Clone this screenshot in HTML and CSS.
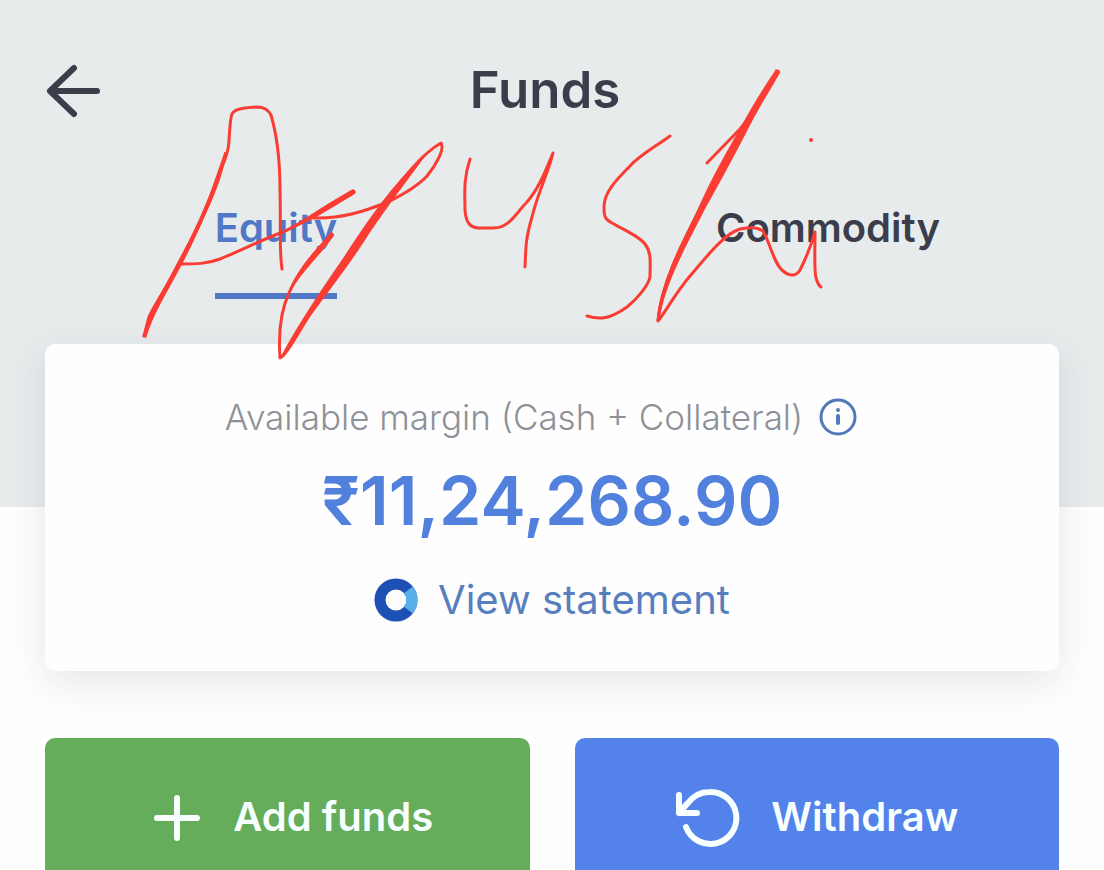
FILE: index.html
```html
<!DOCTYPE html>
<html lang="en">
<head>
<meta charset="utf-8">
<meta name="viewport" content="width=device-width, initial-scale=1">
<title>Funds</title>
<link rel="stylesheet" href="styles.css">
</head>
<body>
<div class="screen">
  <header class="hero">
    <div class="topbar">
      <button class="back" type="button" aria-label="Back">
        <svg class="back-icon" viewBox="0 0 56 56" aria-hidden="true"><path d="M5 29H52M29 6L5 29L29 52"/></svg>
      </button>
      <h1 class="title">Funds</h1>
    </div>
    <nav class="tabs">
      <a class="tab tab-active" href="#equity">Equity</a>
      <a class="tab" href="#commodity">Commodity</a>
    </nav>
  </header>
  <main class="content">
    <section class="card">
      <div class="margin-label">
        <span>Available margin (Cash + Collateral)</span>
        <button class="info" type="button" aria-label="About available margin">
          <svg class="info-icon" viewBox="0 0 38 38" aria-hidden="true"><circle class="ring" cx="19" cy="19" r="17"/><circle class="dot" cx="19" cy="12" r="2"/><path class="stem" d="M19 18V25"/></svg>
        </button>
      </div>
      <p class="amount">₹11,24,268.90</p>
      <a class="statement" href="#statement">
        <svg class="donut" viewBox="0 0 44 44" aria-hidden="true"><circle class="donut-base" cx="22" cy="22" r="16"/><path class="donut-part" d="M34.400 11.900A16 16 0 0 1 34.400 32.100"/></svg>
        <span>View statement</span>
      </a>
    </section>
    <div class="actions">
      <button class="action add" type="button">
        <svg class="plus" viewBox="0 0 48 48" aria-hidden="true"><path d="M24 5V45M4 25H44"/></svg>
        <span>Add funds</span>
      </button>
      <button class="action withdraw" type="button">
        <svg class="undo" viewBox="0 0 66 62" aria-hidden="true"><path d="M4 9V27H22M4 27L12 18C18 10 25 6 34 6A26 26 0 1 1 11 41"/></svg>
        <span>Withdraw</span>
      </button>
    </div>
  </main>
  <svg class="scribble" viewBox="0 0 1104 870" aria-hidden="true">
    <g class="line">
      <path d="M144 336L149 317C157 300 169 284 180 263C193 239 208 207 218 177C225 160 229 150 229 140C230 128 230 119 232 114C235 108 246 108 257 107C264 107 268 109 271 115C276 132 280 160 280 190C281 220 279 250 282 269"/>
      <path d="M180 264C196 264 207 264 220 259C242 250 261 240 283 232C306 222 330 204 353 192"/>
      <path d="M332 234C316 252 300 267 289 293C281 310 278 329 280 358C286 357 302 325 322 295L388 200C402 180 420 155 441 143C445 149 436 165 427 176C417 187 402 195 388 202C365 211 342 219 313 218"/>
      <path d="M470 159C463 180 465 195 465 210C466 223 470 227 478 228H492C509 229 516 213 527 202C539 188 545 172 553 153C549 171 538 192 532 217C525 241 526 248 525 267"/>
      <path d="M670 136C655 147 640 155 630 166C615 181 604 193 604 207C604 217 605 219 612 223C624 230 639 236 645 244C652 253 650 264 650 277C648 286 637 299 627 307C610 319 600 320 587 316"/>
      <path d="M707 163L740 129C756 111 765 91 778 71C760 103 725 160 703 203C686 236 661 281 658 321C665 313 674 295 690 276C708 255 724 234 740 229C751 227 757 227 763 231C771 245 774 264 783 271C789 276 796 277 800 270C806 258 811 246 815 232C815 254 814 270 816 278Q818 285 821 287"/>
    </g>
    <g class="ink">
      <path d="M143 336C151 308 166 286 178 262C193 235 207 205 217 175L225 152C225 168 216 191 204 217C193 242 184 260 180 267C167 292 152 315 146 337Z"/>
      <path d="M260 241C290 231 310 215 330 203L352 190A2 2 0 0 1 354 194L319 215C301 225 283 233 260 241Z"/>
      <path d="M281 357C297 327 320 292 343 259C367 222 394 182 427 153C407 180 388 205 369 233C346 270 324 295 281 357Z"/>
      <path d="M331 233L334 235C320 255 301 272 291 290C299 267 315 251 331 233Z"/>
      <path d="M776 70L780 72C768 93 755 113 744 136C731 161 718 185 705 208C689 240 663 285 659 321H657C660 283 686 236 701 203C714 174 730 147 744 122C754 104 765 86 776 70Z"/>
    </g>
    <circle class="speck" cx="811" cy="140" r="2"/>
  </svg>
</div>
</body>
</html>
```
FILE: styles.css
```css
* { box-sizing: border-box; }

body {
  margin: 0;
  background: #fefefe;
  color: #3b3e4a;
  font-family: Inter, "Liberation Sans", sans-serif;
}

button {
  padding: 0;
  border: 0;
  background: none;
  color: inherit;
  font: inherit;
  cursor: pointer;
}

a { text-decoration: none; }
svg { display: block; fill: none; stroke: currentColor; stroke-linecap: round; stroke-linejoin: round; }

.screen { position: relative; height: 100vh; overflow: hidden; }

.hero { padding: 56px 0 208px; background: #e7ebec; }

.topbar {
  display: grid;
  grid-template-columns: 1fr auto 1fr;
  align-items: center;
  padding: 0 59px 0 45px;
}
.back { justify-self: start; }
.back-icon { width: 56px; height: 56px; stroke-width: 6; }
.title { margin: 0; font-size: 51px; line-height: 68px; font-weight: 600; }

.tabs {
  display: grid;
  grid-template-columns: 1fr 1fr;
  justify-items: center;
  padding-top: 76px;
}
.tab {
  padding-bottom: 37px;
  border-bottom: 6px solid transparent;
  color: inherit;
  font-size: 40px;
  line-height: 56px;
  font-weight: 600;
}
.tab-active { border-color: #5078c6; color: #5078c6; }

.content { margin-top: -163px; padding: 0 45px; }

.card {
  display: flex;
  flex-direction: column;
  align-items: center;
  padding: 48px 24px 45px;
  border-radius: 10px;
  background: #fefefe;
  box-shadow: 0 12px 36px rgba(40, 50, 60, 0.11);
}
.margin-label {
  display: flex;
  align-items: center;
  gap: 16px;
  margin-right: 22px;
  color: #8f9198;
  font-size: 35px;
  line-height: 50px;
  font-weight: 300;
}
.info-icon { width: 38px; height: 38px; color: #5079b8; }
.ring { stroke-width: 3; }
.dot { fill: currentColor; stroke: none; }
.stem { stroke-width: 4; }

.amount {
  margin: 16px 0;
  color: #5280dd;
  font-size: 68px;
  line-height: 84px;
  font-weight: 600;
}
.statement {
  display: flex;
  align-items: center;
  gap: 20px;
  margin-top: 16px;
  color: #587fbd;
  font-size: 40px;
  line-height: 52px;
  font-weight: 400;
}
.donut { width: 44px; height: 44px; stroke-width: 11; stroke-linecap: butt; }
.donut-base { stroke: #1d50b5; }
.donut-part { stroke: #5aaeea; }

.actions {
  display: grid;
  grid-template-columns: 1fr 1fr;
  gap: 45px;
  padding-top: 67px;
}
.action {
  display: flex;
  justify-content: center;
  align-items: center;
  gap: 30px;
  height: 158px;
  border-radius: 10px;
  color: #f8ffff;
  font-size: 40px;
  line-height: 56px;
  font-weight: 600;
}
.add { gap: 32px; padding-left: 12px; background: #65ad5b; }
.withdraw { background: #5382ea; }
.plus { width: 48px; height: 48px; stroke-width: 6; }
.undo { width: 66px; height: 62px; stroke-width: 6; }

.scribble {
  position: absolute;
  top: 0;
  left: 0;
  width: 100%;
  height: auto;
  color: #fb3c33;
  pointer-events: none;
}
.line { stroke-width: 3; }
.ink { fill: currentColor; stroke-width: 1; }
.speck { fill: currentColor; stroke: none; }
```
